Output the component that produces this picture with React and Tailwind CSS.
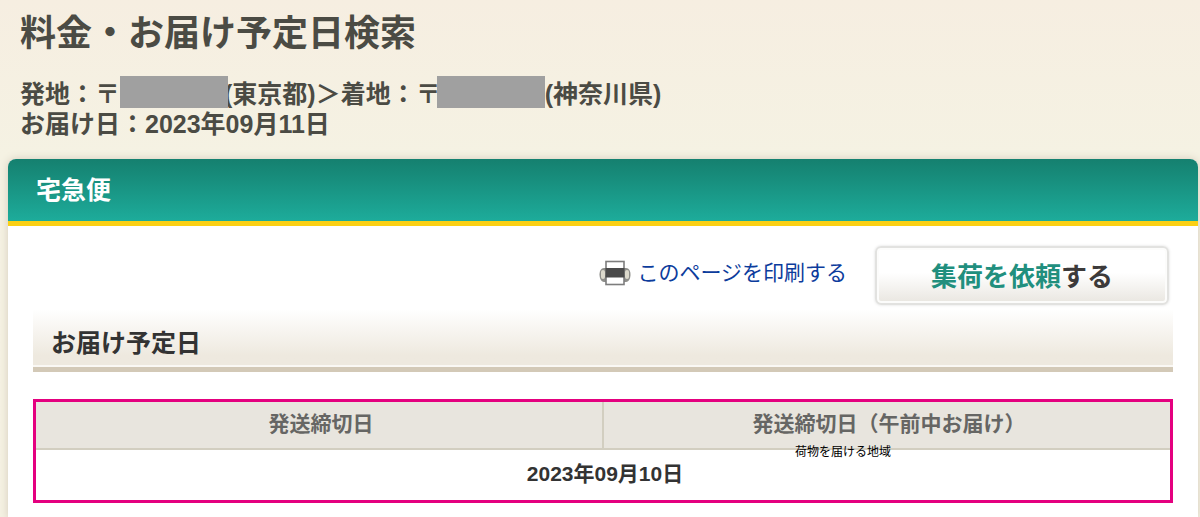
import React from "react";

const PrinterIcon = () => (
  <svg width="32" height="26" viewBox="0 0 32 26" aria-hidden="true">
    <path d="M5 8h22c3 0 4.500 3 4.500 6.500S30 22 27 22H5C2 22 .5 18 .5 14.500S2 8 5 8z" fill="#8e8e8a" />
    <rect x="2" y="10" width="4" height="9" rx="2" fill="#dcd9cc" />
    <rect x="26" y="10" width="4" height="9" rx="2" fill="#dcd9cc" />
    <rect x="7" y="1.500" width="18" height="8" fill="#fff" stroke="#7d7d7d" strokeWidth="1.600" />
    <rect x="7" y="16" width="18" height="8.500" fill="#fff" stroke="#7d7d7d" strokeWidth="1.600" />
    <rect x="6.500" y="8" width="19" height="9.500" fill="#4a4a4a" />
  </svg>
);

const PageHeader = () => {
  return (
    <header className="px-3 pt-4 font-bold text-[#4b4b44]">
      <h1 className="text-4xl leading-9">料金・お届け予定日検索</h1>
      <div className="mt-[27px] text-[25px] leading-[30px]">
        <p>
          発地：〒
          <span className="relative inline-block w-[108px] h-8 -mt-2 -mr-1 align-middle bg-[#a0a0a0]"></span>
          (東京都)＞着地：〒
          <span className="relative inline-block w-[108px] h-8 -mt-2 -ml-1 align-middle bg-[#a0a0a0]"></span>
          (神奈川県)
        </p>
        <p>お届け日：2023年09月11日</p>
      </div>
    </header>
  );
};

const Actions = () => {
  return (
    <div className="flex items-center justify-end gap-7 pr-1">
      <a href="#print" className="flex items-center gap-1.5 pb-1.5 text-[21px] text-[#0c3c9c]">
        <PrinterIcon />
        このページを印刷する
      </a>
      <button
        type="button"
        className="w-[294px] h-[59px] rounded-md border-2 border-[#e2e2e0] bg-linear-to-b from-white from-45% to-[#e9e6e0] pt-1 text-[26px] font-bold text-[#3c3a3a] shadow-[inset_0_0_0_2px_#fcfcfb,0_0_3px_#dddddd]"
      >
        <span className="text-[#218f7e]">集荷を依頼</span>する
      </button>
    </div>
  );
};

const DeliveryTable = () => {
  return (
    <div className="relative mt-[27px]">
      <table className="w-full table-fixed border-collapse border-[3px] border-[#e4007f] text-[21px] leading-8">
        <thead>
          <tr className="bg-[#e8e5de] text-[#666664]">
            <th className="border-r-2 border-b-2 border-[#d2cec0] pl-1 pt-1.5 pb-2">発送締切日</th>
            <th className="border-b-2 border-b-[#d2cec0] pl-1 pt-1.5 pb-2">発送締切日（午前中お届け）</th>
          </tr>
        </thead>
        <tbody>
          <tr>
            <td colSpan={2} className="pl-1 pt-2 pb-2.5 text-center font-bold text-[#333333]">2023年09月10日</td>
          </tr>
        </tbody>
      </table>
      <span className="absolute left-2/3 top-[45px] pl-0.5 text-xs leading-4 text-black">荷物を届ける地域</span>
    </div>
  );
};

const App = () => {
  return (
    <div className="min-h-screen overflow-hidden bg-linear-to-b from-[#f6eee1] to-[#f5f2e3] to-30% pl-2 pr-0.5 font-['Liberation_Sans','Noto_Sans_CJK_JP',sans-serif]">
      <PageHeader />

      <main className="mt-5 min-h-[360px] rounded-t-lg bg-white shadow-[0_0_8px_#d5cbbb]">
        <h2 className="rounded-t-lg border-b-[5px] border-[#fbd014] bg-linear-to-b from-[#15806f] to-[#1dac9b] px-7 py-4 text-[25px] leading-[30px] font-bold text-white">
          宅急便
        </h2>
        <div className="px-[25px] pt-5">
          <Actions />
          <h3 className="mt-1 border-b-[5px] border-[#d3c9b7] bg-linear-to-b from-white to-[#eee9df] to-80% px-[18px] pt-[18px] pb-2 text-[25px] leading-8 font-bold text-[#333333] shadow-[inset_0_-2px_0_#faf8f4]">
            お届け予定日
          </h3>
          <DeliveryTable />
        </div>
      </main>
    </div>
  );
};

export default App;
